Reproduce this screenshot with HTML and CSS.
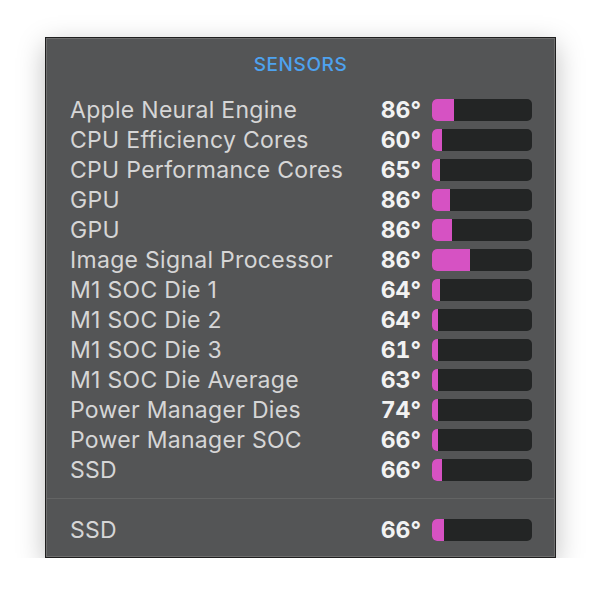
FILE: index.html
```html
<!DOCTYPE html>
<html>
<head>
<meta charset="utf-8">
<link rel="stylesheet" href="styles.css">
</head>
<body>
<div class="page">
  <div class="panel">
    <div class="title">SENSORS</div>
    <div class="rows">
      <div class="row"><span class="label">Apple Neural Engine</span><span class="value">86°</span><span class="bar"><span class="fill" style="width:22px"></span></span></div>
      <div class="row"><span class="label">CPU Efficiency Cores</span><span class="value">60°</span><span class="bar"><span class="fill" style="width:10px"></span></span></div>
      <div class="row"><span class="label">CPU Performance Cores</span><span class="value">65°</span><span class="bar"><span class="fill" style="width:8px"></span></span></div>
      <div class="row"><span class="label">GPU</span><span class="value">86°</span><span class="bar"><span class="fill" style="width:18px"></span></span></div>
      <div class="row"><span class="label">GPU</span><span class="value">86°</span><span class="bar"><span class="fill" style="width:20px"></span></span></div>
      <div class="row"><span class="label">Image Signal Processor</span><span class="value">86°</span><span class="bar"><span class="fill" style="width:38px"></span></span></div>
      <div class="row"><span class="label">M1 SOC Die 1</span><span class="value">64°</span><span class="bar"><span class="fill" style="width:8px"></span></span></div>
      <div class="row"><span class="label">M1 SOC Die 2</span><span class="value">64°</span><span class="bar"><span class="fill" style="width:6px"></span></span></div>
      <div class="row"><span class="label">M1 SOC Die 3</span><span class="value">61°</span><span class="bar"><span class="fill" style="width:6px"></span></span></div>
      <div class="row"><span class="label">M1 SOC Die Average</span><span class="value">63°</span><span class="bar"><span class="fill" style="width:6px"></span></span></div>
      <div class="row"><span class="label">Power Manager Dies</span><span class="value">74°</span><span class="bar"><span class="fill" style="width:6px"></span></span></div>
      <div class="row"><span class="label">Power Manager SOC</span><span class="value">66°</span><span class="bar"><span class="fill" style="width:6px"></span></span></div>
      <div class="row"><span class="label">SSD</span><span class="value">66°</span><span class="bar"><span class="fill" style="width:10px"></span></span></div>
    </div>
    <div class="sep"></div>
    <div class="rows">
      <div class="row"><span class="label">SSD</span><span class="value">66°</span><span class="bar"><span class="fill" style="width:12px"></span></span></div>
    </div>
  </div>
</div>
</body>
</html>
```

FILE: styles.css
```css
html, body {
  margin: 0;
  padding: 0;
  background: #ffffff;
}
.page {
  padding: 37px 0 0 45px;
}
.panel {
  width: 511px;
  height: 521px;
  box-sizing: border-box;
  border: 1px solid #1f1f1f;
  background: #545556;
  box-shadow: inset 0 0 0 1px #6e6e6e, 0 8px 26px rgba(0,0,0,0.26);
  font-family: Inter, "Noto Sans", sans-serif;
  padding-top: 15px;
}
.title {
  text-align: center;
  color: #4ea2ef;
  font-size: 19px;
  font-weight: 500;
  line-height: 24px;
  letter-spacing: 0.6px;
  margin-bottom: 17px;
}
.rows {
  display: flex;
  flex-direction: column;
  padding: 0 23px 0 24px;
}
.row {
  display: grid;
  grid-template-columns: 1fr auto 100px;
  column-gap: 11px;
  align-items: center;
  height: 30px;
}
.label {
  color: #d6d6d6;
  font-size: 23px;
  letter-spacing: 0.3px;
  line-height: 30px;
  padding-top: 1px;
  white-space: nowrap;
}
.value {
  color: #f2f2f2;
  font-size: 23px;
  font-weight: 700;
  line-height: 30px;
  padding-top: 1px;
  text-align: right;
  font-variant-numeric: tabular-nums;
}
.bar {
  display: block;
  height: 22px;
  border-radius: 5px;
  background: #232525;
  overflow: hidden;
}
.fill {
  display: block;
  height: 100%;
  background: #d652c3;
}
.sep {
  height: 1px;
  background: #636464;
  margin: 14px 1px 15px 1px;
}
```
